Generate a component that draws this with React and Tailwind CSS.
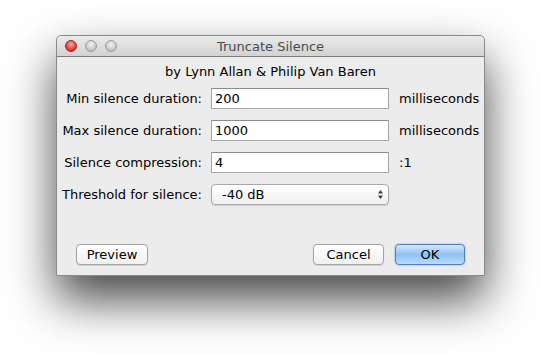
export default function App() {
  const rows = [
    { label: 'Min silence duration:', value: '200', unit: 'milliseconds' },
    { label: 'Max silence duration:', value: '1000', unit: 'milliseconds' },
    { label: 'Silence compression:', value: '4', unit: ':1' },
  ];

  return (
    <div className="w-[541px] h-[355px] bg-white pt-[35px] pl-[56px] font-['Lucida_Grande','DejaVu_Sans',sans-serif] text-[13px] text-black">
      <div className="w-[429px] h-[241px] flex flex-col bg-[#ececec] border border-[#8a8a8a] rounded-t-[5px] shadow-[0_24px_48px_rgba(0,0,0,0.72)]">
        {/* title bar */}
        <div className="relative h-[21px] flex items-center justify-center bg-gradient-to-b from-[#ebebeb] to-[#d2d2d2] border-b border-[#7c7c7c] rounded-t-[5px]">
          <div className="absolute left-[8px] top-[4px] flex gap-[8px]">
            <span className="w-[12px] h-[12px] rounded-full border border-[#9a2a2a] bg-[radial-gradient(circle_at_50%_35%,#ffb0a8,#e8453c_55%,#b51f1a)]" />
            <span className="w-[12px] h-[12px] rounded-full border border-[#9c9c9c] bg-[radial-gradient(circle_at_50%_35%,#f4f4f4,#c9c9c9_60%,#a9a9a9)]" />
            <span className="w-[12px] h-[12px] rounded-full border border-[#9c9c9c] bg-[radial-gradient(circle_at_50%_35%,#f4f4f4,#c9c9c9_60%,#a9a9a9)]" />
          </div>
          <span className="text-[13px] text-[#4a4a4a] leading-none">Truncate Silence</span>
        </div>

        {/* body */}
        <div className="flex-1 flex flex-col">
          <div className="text-center mt-[7px] leading-[16px]">by Lynn Allan &amp; Philip Van Baren</div>

          <div className="flex flex-col gap-[11px] mt-[8px]">
            {rows.map((r) => (
              <div key={r.label} className="flex items-center h-[21px] whitespace-nowrap">
                <div className="w-[154px] text-right pr-[9px]">{r.label}</div>
                <div className="w-[178px] h-[21px] bg-white border border-[#a5a5a5] border-t-[#8c8c8c] px-[3px] flex items-center">{r.value}</div>
                <div className="pl-[10px]">{r.unit}</div>
              </div>
            ))}
            <div className="flex items-center h-[21px] whitespace-nowrap">
              <div className="w-[154px] text-right pr-[9px]">Threshold for silence:</div>
              <div className="w-[178px] h-[21px] rounded-[4px] border border-[#a8a8a8] bg-gradient-to-b from-white to-[#f1f1f1] shadow-[0_1px_1px_rgba(0,0,0,0.12)] flex items-center justify-between pl-[10px] pr-[4px]">
                <span>-40 dB</span>
                <svg width="7" height="11" viewBox="0 0 7 11">
                  <path d="M3.5 1 L6 4.5 L1 4.5 Z" fill="#3a3a3a" />
                  <path d="M3.5 10 L6 6.5 L1 6.5 Z" fill="#3a3a3a" />
                </svg>
              </div>
            </div>
          </div>

          <div className="mt-auto mb-[10px] flex items-center px-[19px]">
            <button className="w-[72px] h-[21px] rounded-[4px] border border-[#a3a3a3] bg-gradient-to-b from-white to-[#f0f0f0] shadow-[0_1px_1px_rgba(0,0,0,0.12)] leading-none">Preview</button>
            <div className="flex-1" />
            <button className="w-[71px] h-[21px] rounded-[4px] border border-[#a3a3a3] bg-gradient-to-b from-white to-[#f0f0f0] shadow-[0_1px_1px_rgba(0,0,0,0.12)] leading-none">Cancel</button>
            <button className="ml-[11px] w-[70px] h-[21px] rounded-[4px] border border-[#4f7fbf] bg-gradient-to-b from-[#d5e8fb] via-[#8fc1f2] to-[#b9dcfb] shadow-[0_0_2px_rgba(60,120,200,0.7)] leading-none">OK</button>
          </div>
        </div>
      </div>
    </div>
  );
}
